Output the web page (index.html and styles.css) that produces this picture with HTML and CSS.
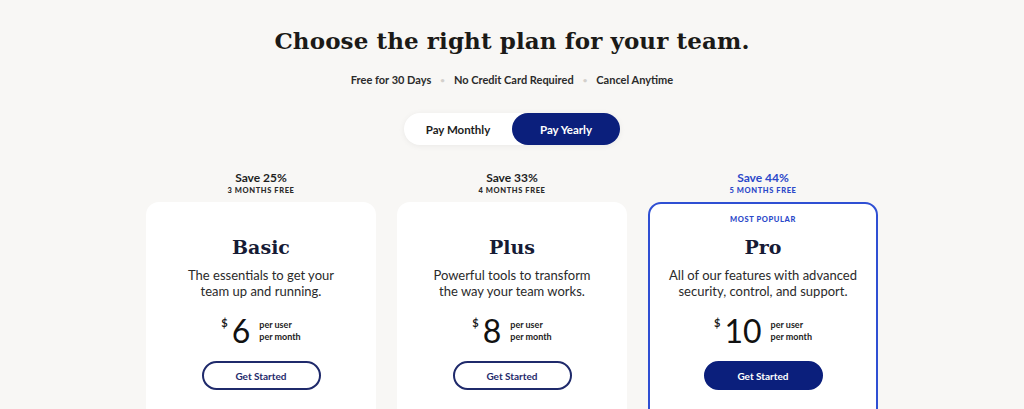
FILE: index.html
```html
<!DOCTYPE html>
<html lang="en">
<head>
    <meta charset="UTF-8">
    <title>Pricing</title>
    <meta name="viewport" content="width=device-width, initial-scale=1.0">
    <link rel="stylesheet" href="styles.css">
</head>
<body>
    <div class="pricing">
        <h1 class="title">Choose the right plan for your team.</h1>
        <div class="perks">
            <span>Free for 30 Days</span>
            <span class="dot">&bull;</span>
            <span>No Credit Card Required</span>
            <span class="dot">&bull;</span>
            <span>Cancel Anytime</span>
        </div>

        <div class="toggle">
            <button class="toggle-btn">Pay Monthly</button>
            <button class="toggle-btn active">Pay Yearly</button>
        </div>

        <div class="plans">
            <div class="plan">
                <div class="save">
                    <div class="save-pct">Save 25%</div>
                    <div class="save-months">3 Months Free</div>
                </div>
                <div class="card">
                    <h2 class="plan-name">Basic</h2>
                    <p class="plan-desc">The essentials to get your<br>team up and running.</p>
                    <div class="price">
                        <span class="currency">$</span>
                        <span class="amount">6</span>
                        <span class="unit">per user<br>per month</span>
                    </div>
                    <button class="cta">Get Started</button>
                </div>
            </div>

            <div class="plan">
                <div class="save">
                    <div class="save-pct">Save 33%</div>
                    <div class="save-months">4 Months Free</div>
                </div>
                <div class="card">
                    <h2 class="plan-name">Plus</h2>
                    <p class="plan-desc">Powerful tools to transform<br>the way your team works.</p>
                    <div class="price">
                        <span class="currency">$</span>
                        <span class="amount">8</span>
                        <span class="unit">per user<br>per month</span>
                    </div>
                    <button class="cta">Get Started</button>
                </div>
            </div>

            <div class="plan popular">
                <div class="save">
                    <div class="save-pct">Save 44%</div>
                    <div class="save-months">5 Months Free</div>
                </div>
                <div class="card">
                    <div class="badge">Most Popular</div>
                    <h2 class="plan-name">Pro</h2>
                    <p class="plan-desc">All of our features with advanced<br>security, control, and support.</p>
                    <div class="price">
                        <span class="currency">$</span>
                        <span class="amount">10</span>
                        <span class="unit">per user<br>per month</span>
                    </div>
                    <button class="cta filled">Get Started</button>
                </div>
            </div>
        </div>
    </div>
</body>
</html>
```

FILE: styles.css
```css
body {
    background: #f8f7f5;
    margin: 0;
    font-family: "Lato", "Noto Sans", sans-serif;
    color: #1c1c1c;
    overflow: hidden;
}

.pricing {
    display: flex;
    flex-direction: column;
    align-items: center;
    padding-top: 22px;
}

.title {
    font-family: "DejaVu Serif", serif;
    font-weight: bold;
    font-size: 23px;
    line-height: 38px;
    margin: 0;
    color: #1b1a17;
    letter-spacing: 0.1px;
}

.perks {
    display: flex;
    align-items: center;
    gap: 9px;
    margin-top: 12px;
    font-size: 11px;
    font-weight: bold;
    color: #2b2b2b;
    line-height: 16px;
}

    .perks .dot {
        color: #d3d0cc;
        font-size: 8px;
    }

.toggle {
    display: flex;
    margin-top: 25px;
    background: #fff;
    border-radius: 16px;
    box-shadow: 0 1px 6px #0000000f;
    width: 216px;
}

.toggle-btn {
    flex: 1;
    height: 32px;
    border: none;
    background: none;
    border-radius: 16px;
    font-family: inherit;
    font-size: 11.5px;
    font-weight: bold;
    color: #1c1c1c;
    cursor: pointer;
}

    .toggle-btn.active {
        background: #0b1f7c;
        color: #fff;
    }

.plans {
    display: flex;
    gap: 21px;
    margin-top: 25px;
}

.plan {
    width: 230px;
    display: flex;
    flex-direction: column;
    align-items: center;
}

.save {
    text-align: center;
    height: 32px;
}

.save-pct {
    font-size: 12px;
    font-weight: bold;
    line-height: 15px;
    color: #1f1f1f;
}

.save-months {
    font-size: 7.5px;
    font-weight: 900;
    text-transform: uppercase;
    letter-spacing: 0.6px;
    line-height: 11px;
    color: #2b2b2b;
}

.card {
    box-sizing: border-box;
    width: 100%;
    height: 240px;
    background: #fff;
    border: 2px solid transparent;
    border-radius: 13px;
    display: flex;
    flex-direction: column;
    align-items: center;
    padding-top: 30px;
}

.plan-name {
    font-family: "DejaVu Serif", serif;
    font-size: 19px;
    line-height: 26px;
    margin: 0;
    color: #161b35;
}

.plan-desc {
    margin: 7px 0 0;
    font-size: 13px;
    line-height: 16px;
    text-align: center;
    color: #2a2a2a;
}

.price {
    display: flex;
    align-items: center;
    margin-top: 15px;
    height: 34px;
}

.currency {
    font-size: 11px;
    font-weight: bold;
    align-self: flex-start;
    margin-top: 2px;
    margin-right: 4px;
}

.amount {
    font-size: 32px;
    font-weight: normal;
    line-height: 34px;
    color: #111;
}

.unit {
    font-size: 9px;
    font-weight: bold;
    line-height: 12px;
    margin-left: 9px;
    color: #222;
}

.cta {
    margin-top: 13px;
    width: 119px;
    height: 29px;
    border: 2px solid #1f2a6b;
    border-radius: 15px;
    background: #fff;
    font-family: inherit;
    font-size: 10px;
    font-weight: bold;
    color: #1f2a6b;
    cursor: pointer;
}

    .cta.filled {
        background: #0b1f7c;
        border-color: #0b1f7c;
        color: #fff;
    }

.popular .save-pct,
.popular .save-months {
    color: #2b48c9;
}

.popular .card {
    border-color: #2f4fd3;
    padding-top: 10px;
}

.badge {
    font-size: 7.5px;
    font-weight: 900;
    text-transform: uppercase;
    letter-spacing: 0.6px;
    line-height: 11px;
    color: #2b48c9;
    margin-bottom: 9px;
}
```
